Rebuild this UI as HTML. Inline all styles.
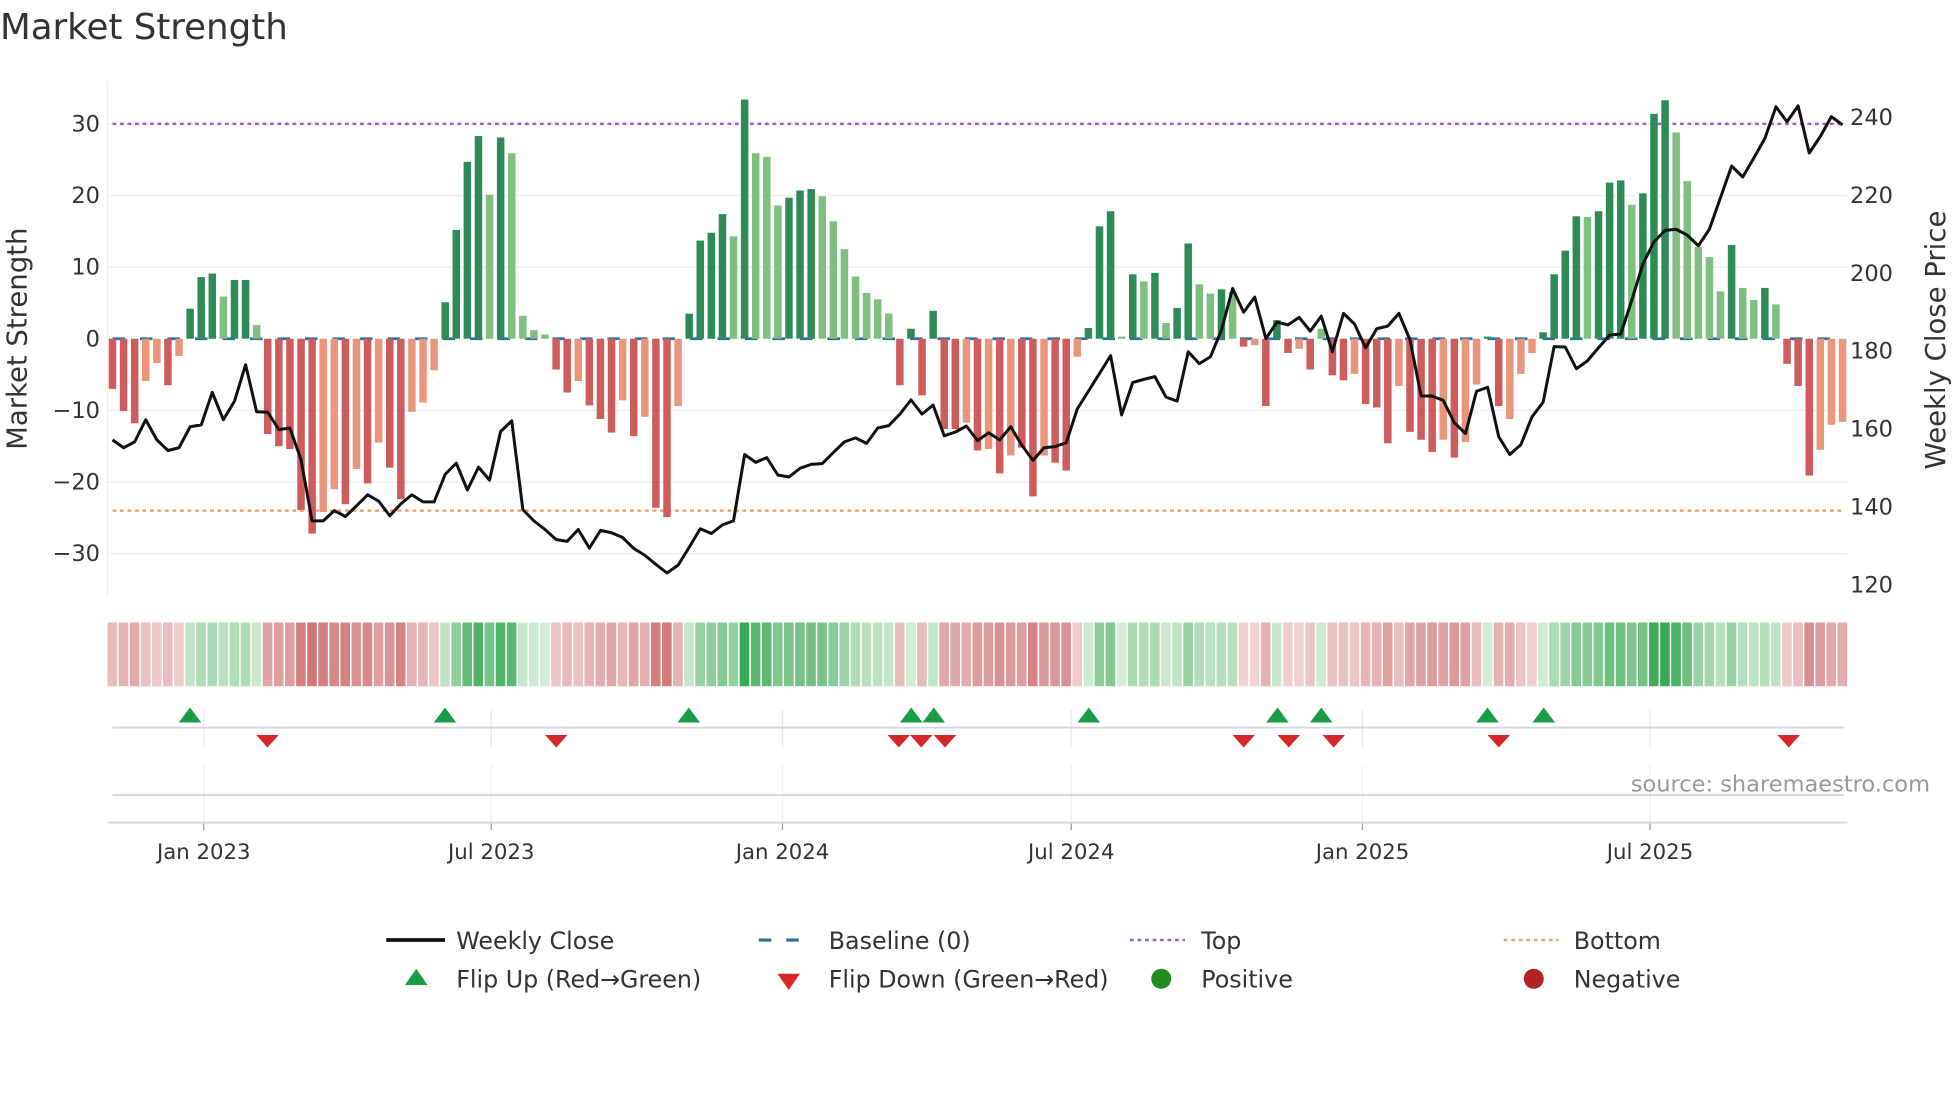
<!DOCTYPE html>
<html><head><meta charset="utf-8"><style>
html,body{margin:0;padding:0;background:#fff;width:1960px;height:1102px;overflow:hidden}
svg{display:block}
text{font-family:"DejaVu Sans","Liberation Sans",sans-serif}
</style></head><body>
<svg id="s" width="1960" height="1102" viewBox="0 0 1568 881.6" xmlns="http://www.w3.org/2000/svg">
<text x="0" y="31" font-size="28.5" fill="#333">Market Strength</text>
<g id="grid"></g>
<g id="bars"></g>
<g id="heat"></g>
<g id="line"></g>
<g id="marks"></g>
<text x="1544" y="633" font-size="18" fill="#999" text-anchor="end">source: sharemaestro.com</text>
<text transform="translate(21,271) rotate(-90)" font-size="22" fill="#333" text-anchor="middle">Market Strength</text>
<text transform="translate(1556,272) rotate(-90)" font-size="22" fill="#333" text-anchor="middle">Weekly Close Price</text>
<g font-size="19" fill="#333">
<line x1="309" y1="752" x2="356" y2="752" stroke="#111" stroke-width="3"/>
<text x="365" y="759">Weekly Close</text>
<line x1="607" y1="752" x2="650" y2="752" stroke="#2f6fa0" stroke-width="2.5" stroke-dasharray="10,12"/>
<text x="663" y="759">Baseline (0)</text>
<line x1="904" y1="752" x2="948" y2="752" stroke="#9b5fd6" stroke-width="2" stroke-dasharray="3,3"/>
<text x="961" y="759">Top</text>
<line x1="1203" y1="752" x2="1247" y2="752" stroke="#f2a06a" stroke-width="2" stroke-dasharray="3,3"/>
<text x="1259" y="759">Bottom</text>
<polygon points="324,788 342,788 333,775" fill="#1a9c47"/>
<text x="365" y="790">Flip Up (Red→Green)</text>
<polygon points="622,779 640,779 631,792" fill="#d62728"/>
<text x="663" y="790">Flip Down (Green→Red)</text>
<circle cx="929" cy="783" r="8" fill="#228b22"/>
<text x="961" y="790">Positive</text>
<circle cx="1227" cy="783" r="8" fill="#b22222"/>
<text x="1259" y="790">Negative</text>
</g>
</svg>
<script>
var NS="http://www.w3.org/2000/svg";
function el(p,t,a){var e=document.createElementNS(NS,t);for(var k in a)e.setAttribute(k,a[k]);document.getElementById(p).appendChild(e);return e;}
var V=[[-7,0],[-10.1,0],[-11.8,0],[-5.9,1],[-3.4,1],[-6.5,0],[-2.4,1],[4.2,0],[8.6,0],[9.1,0],[5.9,1],[8.2,0],[8.2,0],[1.9,1],[-13.3,0],[-15,0],[-15.4,0],[-23.9,0],[-27.2,0],[-24.2,1],[-21,1],[-23.1,0],[-18.2,1],[-20.2,0],[-14.5,1],[-18,0],[-22.4,0],[-10.2,1],[-8.9,1],[-4.4,1],[5.1,0],[15.2,0],[24.7,0],[28.3,0],[20.1,1],[28.1,0],[25.9,1],[3.2,1],[1.2,1],[0.6,1],[-4.3,0],[-7.5,0],[-5.9,1],[-9.3,0],[-11.2,0],[-13.1,0],[-8.6,1],[-13.6,0],[-10.9,1],[-23.6,0],[-24.9,0],[-9.4,1],[3.5,0],[13.7,0],[14.8,0],[17.4,0],[14.3,1],[33.4,0],[25.9,1],[25.4,1],[18.6,1],[19.7,0],[20.7,0],[20.9,0],[19.9,1],[16.4,1],[12.5,1],[8.7,1],[6.4,1],[5.5,1],[3.5,1],[-6.5,0],[1.4,0],[-7.9,0],[3.9,0],[-12.6,0],[-12.6,0],[-11.7,1],[-15.6,0],[-15.4,1],[-18.8,0],[-16.3,1],[-15.2,0],[-22,0],[-16.3,1],[-17.3,0],[-18.4,0],[-2.5,1],[1.5,0],[15.7,0],[17.8,0],[0.3,1],[9,0],[8,1],[9.2,0],[2.2,1],[4.3,0],[13.3,0],[7.6,1],[6.3,1],[6.9,0],[6.5,1],[-1.1,0],[-0.9,1],[-9.4,0],[2.6,0],[-2,0],[-1.4,1],[-4.3,0],[1.4,1],[-5.1,0],[-5.8,0],[-4.9,1],[-9.1,0],[-9.6,0],[-14.6,0],[-6.6,1],[-13,0],[-14.1,0],[-15.8,0],[-14.1,1],[-16.6,0],[-14.4,1],[-6.4,1],[0.3,0],[-9.4,0],[-11.2,1],[-4.9,1],[-2,1],[0.9,0],[9,0],[12.3,0],[17.1,0],[17,1],[17.8,0],[21.8,0],[22.1,0],[18.7,1],[20.3,0],[31.4,0],[33.3,0],[28.8,1],[22,1],[12.8,1],[11.4,1],[6.6,1],[13.1,0],[7.1,1],[5.4,1],[7.1,0],[4.8,1],[-3.5,0],[-6.6,0],[-19.1,0],[-15.5,1],[-12,1],[-11.6,1]];
var P=[1113,1133,1118,1062,1113,1140,1133,1080,1075,993,1062,1015,923,1042,1043,1087,1083,1163,1318,1318,1292,1307,1280,1252,1268,1305,1275,1252,1270,1270,1200,1172,1240,1182,1215,1092,1065,1290,1318,1340,1365,1370,1340,1387,1342,1348,1360,1388,1405,1428,1450,1430,1385,1338,1350,1328,1318,1150,1170,1158,1202,1207,1185,1175,1173,1145,1118,1108,1122,1083,1077,1048,1012,1048,1025,1103,1093,1078,1115,1095,1113,1080,1127,1165,1133,1130,1120,1035,990,945,900,1050,968,960,953,1005,1015,890,920,903,835,730,790,752,857,815,822,803,838,800,890,793,820,880,832,825,793,860,1002,1002,1013,1070,1097,990,980,1105,1150,1125,1055,1018,877,878,933,913,880,848,845,760,668,612,583,580,595,622,580,500,420,448,400,350,270,308,268,387,345,295,316];
var N=V.length,x0=90,dx=(1474-90)/(N-1);
function X(i){return x0+i*dx;}
function Y(v){return 271-v*5.73;}
[30,20,10,-10,-20,-30].forEach(function(v){el("grid","line",{x1:86,x2:1478,y1:Y(v),y2:Y(v),stroke:"#eef0f5","stroke-width":1.2});});
el("grid","line",{x1:86,x2:86,y1:65,y2:478,stroke:"#eef0f5","stroke-width":1.2});
[163,393,626,857,1090,1320].forEach(function(x){el("grid","line",{x1:x,x2:x,y1:568,y2:598,stroke:"#e6e9ef","stroke-width":1});el("grid","line",{x1:x,x2:x,y1:612,y2:658,stroke:"#eef0f5","stroke-width":1});el("grid","line",{x1:x,x2:x,y1:658,y2:664,stroke:"#999","stroke-width":1});});
var labs=["Jan 2023","Jul 2023","Jan 2024","Jul 2024","Jan 2025","Jul 2025"];
[163,393,626,857,1090,1320].forEach(function(x,i){var t=el("grid","text",{x:x,y:687,"font-size":17,fill:"#333","text-anchor":"middle"});t.textContent=labs[i];});
[[30,"30"],[20,"20"],[10,"10"],[0,"0"],[-10,"−10"],[-20,"−20"],[-30,"−30"]].forEach(function(a){var t=el("grid","text",{x:80,y:Y(a[0])+6,"font-size":18,fill:"#333","text-anchor":"end"});t.textContent=a[1];});
[240,220,200,180,160,140,120].forEach(function(p){var t=el("grid","text",{x:1480,y:94+(240-p)*3.115+6,"font-size":18,fill:"#333"});t.textContent=p;});
el("grid","line",{x1:90,x2:1475,y1:582,y2:582,stroke:"#d4d6db","stroke-width":1.5});
el("grid","line",{x1:90,x2:1475,y1:636,y2:636,stroke:"#d4d6db","stroke-width":1.5});
el("grid","line",{x1:86,x2:1478,y1:658,y2:658,stroke:"#d4d6db","stroke-width":1.5});
el("grid","line",{x1:90,x2:1475,y1:271,y2:271,stroke:"#2f6fa0","stroke-width":2.2,"stroke-dasharray":"10,12"});
el("grid","line",{x1:90,x2:1475,y1:Y(30),y2:Y(30),stroke:"#9b5fd6","stroke-width":2,"stroke-dasharray":"3,3"});
el("grid","line",{x1:90,x2:1475,y1:Y(-24),y2:Y(-24),stroke:"#f2a06a","stroke-width":2,"stroke-dasharray":"3,3"});
function mix(a,b,t){return "rgb("+[0,1,2].map(function(k){return Math.round(a[k]+(b[k]-a[k])*t);}).join(",")+")";}
V.forEach(function(d,i){var v=d[0],c;
 if(v>=0)c=d[1]?"#7fbf7f":"#2e8b57";else c=d[1]?"#e9967a":"#cd5c5c";
 var y=Y(v),h=Math.abs(v*5.73);el("bars","rect",{x:X(i)-3,y:Math.min(y,271),width:6,height:Math.max(h,0.8),fill:c});
 var hc;if(v>=0){var t=Math.min(v/33,1);hc=mix([214,238,216],[58,168,84],t);}else{var t=Math.min(-v/26,1);hc=mix([242,214,214],[208,118,118],t);}
 el("heat","rect",{x:X(i)-dx/2+0.5,y:498,width:dx-1.2,height:51,fill:hc});
});
var pts=P.map(function(p,i){return X(i).toFixed(1)+","+(p/3.163).toFixed(1);}).join(" ");
el("line","polyline",{points:pts,fill:"none",stroke:"#111","stroke-width":2.4,"stroke-linejoin":"round"});
[152,356,551,729,747,871,1022,1057,1190,1235].forEach(function(x){el("marks","polygon",{points:(x-9)+",578 "+(x+9)+",578 "+x+",566",fill:"#1a9c47"});});
[214,445,719,737,756,995,1031,1067,1199,1431].forEach(function(x){el("marks","polygon",{points:(x-9)+",588 "+(x+9)+",588 "+x+",598",fill:"#d62728"});});
</script>
</body></html>
